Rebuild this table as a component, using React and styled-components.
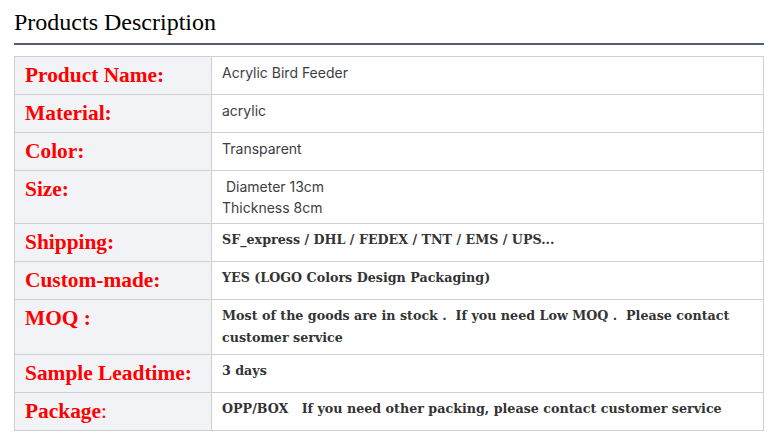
import React from 'react';
import styled, { createGlobalStyle } from 'styled-components';

const GlobalStyle = createGlobalStyle`
  body {
    margin: 0;
    background: #fff;
  }
`;

const Wrapper = styled.div`
  padding: 0 11px 0 14px;
`;

const Title = styled.h2`
  margin: 0;
  padding: 4px 0 3px;
  font-family: "Liberation Serif", "Times New Roman", serif;
  font-size: 24px;
  font-weight: normal;
  line-height: 36px;
  color: #000;
  border-bottom: 2px solid #515d70;
`;

const Table = styled.table`
  width: 100%;
  margin-top: 11px;
  border-collapse: collapse;
  table-layout: fixed;
`;

const Label = styled.th`
  width: 176px;
  padding: 5px 10px;
  vertical-align: top;
  text-align: left;
  background: #f2f3f7;
  border: 1px solid #d0d0d0;
  font-family: "Liberation Serif", "Times New Roman", serif;
  font-size: 21.4px;
  line-height: 27px;
  font-weight: bold;
  color: #ff0000;
  white-space: nowrap;
`;

const Thin = styled.span`
  font-weight: normal;
`;

const Value = styled.td`
  padding: 5px 10px;
  vertical-align: top;
  border: 1px solid #d0d0d0;
  background: #fff;
  font-family: ${(p) => (p.serif ? '"DejaVu Serif", Georgia, serif' : 'Inter, "Noto Sans", sans-serif')};
  font-size: ${(p) => (p.serif ? '12.7px' : '14px')};
  font-weight: ${(p) => (p.serif ? 'bold' : 'normal')};
  line-height: ${(p) => (p.serif ? '22px' : '21px')};
  color: ${(p) => (p.serif ? '#333' : '#3d3d45')};
  white-space: pre-wrap;
`;

const rows = [
  { label: 'Product Name:', value: 'Acrylic Bird Feeder' },
  { label: 'Material:', value: 'acrylic' },
  { label: 'Color:', value: 'Transparent' },
  { label: 'Size:', value: ' Diameter 13cm\nThickness 8cm' },
  { label: 'Shipping:', value: 'SF_express / DHL / FEDEX / TNT / EMS / UPS...', serif: true },
  { label: 'Custom-made:', value: 'YES (LOGO Colors Design Packaging)', serif: true },
  {
    label: 'MOQ :',
    value: 'Most of the goods are in stock .  If you need Low MOQ .  Please contact customer service',
    serif: true,
  },
  { label: 'Sample Leadtime:', value: '3 days', serif: true },
  {
    label: 'Package',
    thin: ':',
    value: 'OPP/BOX   If you need other packing, please contact customer service',
    serif: true,
  },
];

function App() {
  return (
    <Wrapper>
      <GlobalStyle />
      <Title>Products Description</Title>
      <Table>
        <tbody>
          {rows.map((row) => (
            <tr key={row.label}>
              <Label>
                {row.label}
                {row.thin && <Thin>{row.thin}</Thin>}
              </Label>
              <Value serif={row.serif}>{row.value}</Value>
            </tr>
          ))}
        </tbody>
      </Table>
    </Wrapper>
  );
}

export default App;
